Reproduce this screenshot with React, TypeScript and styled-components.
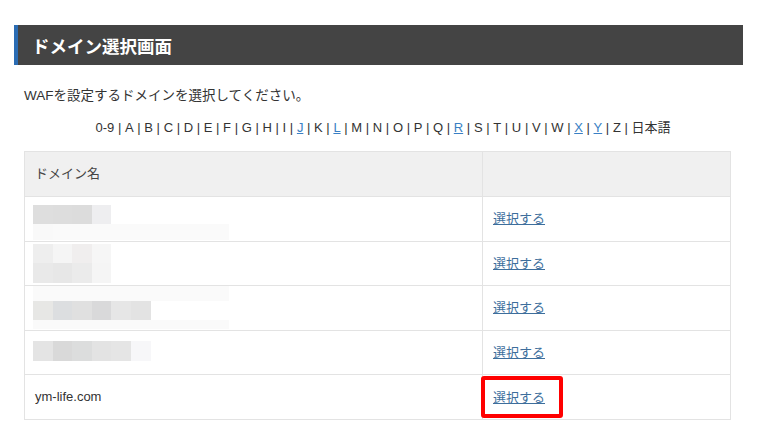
import React from "react";
import styled, { createGlobalStyle } from "styled-components";

const Global = createGlobalStyle`
  html, body { margin: 0; padding: 0; background: #fff; }
  body { font-family: "Liberation Sans", "Noto Sans CJK JP", sans-serif; color: #333; }
`;

const Page = styled.div`
  width: 768px;
  height: 443px;
  padding: 25px 25px 0 14px;
  box-sizing: border-box;
  display: flex;
  flex-direction: column;
  overflow: hidden;
`;

const TitleBar = styled.h1`
  margin: 0;
  height: 40px;
  background: #444444;
  border-left: 4px solid #2b6cb3;
  display: flex;
  align-items: center;
  padding-left: 14px;
  color: #fff;
  font-family: "Noto Sans CJK JP", sans-serif;
  font-weight: 700;
  font-size: 17.5px;
`;

const Content = styled.div`
  padding: 0 12px 0 10px;
  display: flex;
  flex-direction: column;
`;

const Lead = styled.p`
  margin: 22px 0 0 0;
  font-size: 13.5px;
  line-height: 18px;
  color: #333;
`;

const AlphaNav = styled.div`
  margin-top: 14px;
  padding-left: 11px;
  text-align: center;
  font-size: 13px;
  line-height: 18px;
  color: #333;
`;

const Sep = styled.span`
  margin: 0 3.65px;
`;

const AlphaLink = styled.a<{ $active: boolean }>`
  color: ${(p) => (p.$active ? "#3a7fc4" : "#333")};
  text-decoration: ${(p) => (p.$active ? "underline" : "none")};
`;

const Table = styled.table`
  margin-top: 14px;
  width: 707px;
  border-collapse: collapse;
  font-size: 13px;
  table-layout: fixed;
`;

const HeadCell = styled.th`
  background: #f0f0f0;
  border: 1px solid #e3e3e3;
  height: 45px;
  padding: 0 10px 3px;
  text-align: left;
  font-weight: 400;
  color: #444;
  box-sizing: border-box;
  font-family: "Noto Sans CJK JP", sans-serif;
  &:first-child { width: 458px; }
`;

const Cell = styled.td`
  border: 1px solid #e3e3e3;
  height: 44.6px;
  padding: 0 10px 2px;
  box-sizing: border-box;
  vertical-align: middle;
  color: #333;
`;

const MaskCell = styled(Cell)`
  vertical-align: top;
  padding: 0 10px 0 8px;
`;

const ActionCell = styled(Cell)`
  position: relative;
`;

const SelectLink = styled.a`
  color: #3d6e9c;
  text-decoration: underline;
  font-family: "Noto Sans CJK JP", sans-serif;
  font-size: 13px;
`;

const Highlight = styled.div`
  position: absolute;
  left: -2px;
  top: 1px;
  width: 82px;
  height: 42px;
  border: 4px solid #ff0000;
  border-radius: 3px;
  box-sizing: border-box;
  pointer-events: none;
`;

const Mosaic = styled.div<{ $top: number; $rows: string }>`
  display: grid;
  grid-template-columns: repeat(10, 19.6px);
  grid-template-rows: ${(p) => p.$rows};
  margin-top: ${(p) => p.$top}px;
`;

const Tile = styled.div<{ $c: string }>`
  background: ${(p) => p.$c};
`;

const letters = [
  "0-9", "A", "B", "C", "D", "E", "F", "G", "H", "I", "J", "K", "L", "M", "N",
  "O", "P", "Q", "R", "S", "T", "U", "V", "W", "X", "Y", "Z", "日本語",
];
const active = new Set(["J", "L", "R", "X", "Y"]);

const W = "#ffffff";
const F = "#fafafa";

type Row = { tiles: string[][]; top: number; rows: string } | null;

const rows: Row[] = [
  {
    top: 8,
    rows: "19px 16px",
    tiles: [
      ["#dedede", "#dddddd", "#dcdcdc", "#eeeef0", W, W, W, W, W, W],
      ["#f9f9f9", F, F, F, F, F, F, F, F, F],
    ],
  },
  {
    top: 2,
    rows: "19px 20px",
    tiles: [
      ["#eeeeee", "#f5f5f5", "#f0eeee", "#f6f6f6", W, W, W, W, W, W],
      ["#e9e9e9", "#e7e7e7", "#ebebeb", "#f5f5f5", W, W, W, W, W, W],
    ],
  },
  {
    top: 0,
    rows: "15px 19px 9px",
    tiles: [
      [F, F, F, F, F, F, F, F, F, F],
      ["#e7e7e5", "#dcdee0", "#e0e0e0", "#d9d9da", "#e6e6e6", "#e3e3e3", W, W, W, W],
      [F, F, F, F, F, F, F, F, F, F],
    ],
  },
  {
    top: 10,
    rows: "20px",
    tiles: [
      ["#e4e4e4", "#d9d9d9", "#dcdddd", "#e3e3e3", "#e5e5e5", "#f7f7f9", W, W, W, W],
    ],
  },
  null,
];

export default function App() {
  return (
    <Page>
      <Global />
      <TitleBar>ドメイン選択画面</TitleBar>
      <Content>
        <Lead>WAFを設定するドメインを選択してください。</Lead>
        <AlphaNav>
          {letters.map((l, i) => (
            <React.Fragment key={l}>
              {i > 0 && <Sep>|</Sep>}
              <AlphaLink $active={active.has(l)}>{l}</AlphaLink>
            </React.Fragment>
          ))}
        </AlphaNav>
        <Table>
          <thead>
            <tr>
              <HeadCell>ドメイン名</HeadCell>
              <HeadCell />
            </tr>
          </thead>
          <tbody>
            {rows.map((r, i) => (
              <tr key={i}>
                {r ? (
                  <MaskCell>
                    <Mosaic $top={r.top} $rows={r.rows}>
                      {r.tiles.flat().map((c, j) => (
                        <Tile key={j} $c={c} />
                      ))}
                    </Mosaic>
                  </MaskCell>
                ) : (
                  <Cell>ym-life.com</Cell>
                )}
                <ActionCell>
                  <SelectLink>選択する</SelectLink>
                  {i === rows.length - 1 && <Highlight />}
                </ActionCell>
              </tr>
            ))}
          </tbody>
        </Table>
      </Content>
    </Page>
  );
}
